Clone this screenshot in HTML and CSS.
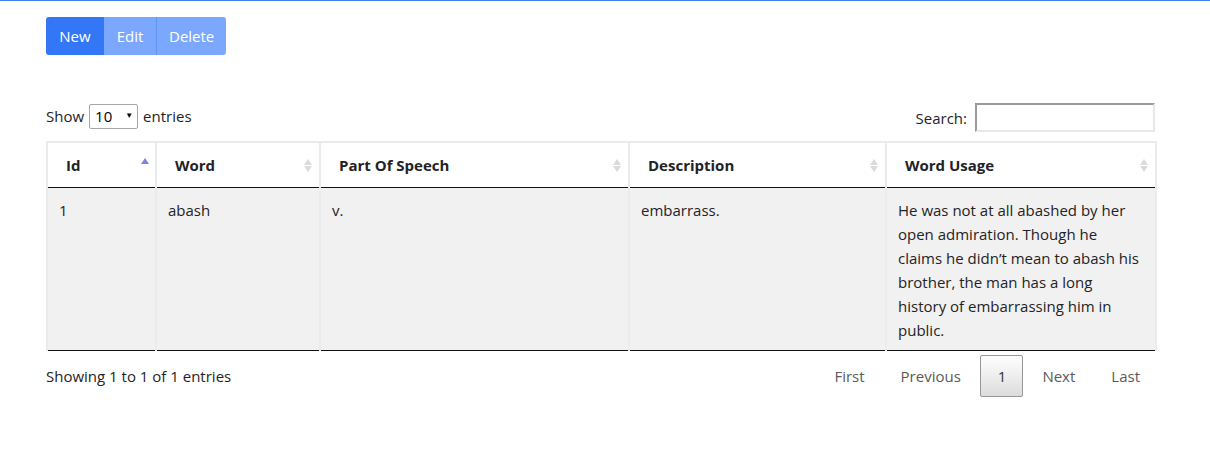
FILE: index.html
```html
<!DOCTYPE html>
<html>
<head>
<meta charset="utf-8">
<link rel="stylesheet" href="styles.css">
</head>
<body>
<div class="topline"></div>
<div class="page">
  <div class="btn-group">
    <button class="btn btn-new">New</button>
    <button class="btn btn-dis">Edit</button>
    <button class="btn btn-dis btn-last">Delete</button>
  </div>

  <div class="controls">
    <label class="length">Show
      <span class="select">10<span class="caret">&#9660;</span></span>
      entries</label>
    <label class="search">Search: <span class="search-input"></span></label>
  </div>

  <table class="grid">
    <colgroup>
      <col class="c1"><col class="c2"><col class="c3"><col class="c4"><col class="c5">
    </colgroup>
    <thead>
      <tr>
        <th class="sorted">Id<span class="sort-up"></span></th>
        <th>Word<span class="sort-both"><i class="u"></i><i class="d"></i></span></th>
        <th>Part Of Speech<span class="sort-both"><i class="u"></i><i class="d"></i></span></th>
        <th>Description<span class="sort-both"><i class="u"></i><i class="d"></i></span></th>
        <th>Word Usage<span class="sort-both"><i class="u"></i><i class="d"></i></span></th>
      </tr>
    </thead>
    <tbody>
      <tr>
        <td>1</td>
        <td>abash</td>
        <td>v.</td>
        <td>embarrass.</td>
        <td>He was not at all abashed by her open admiration. Though he claims he didn’t mean to abash his brother, the man has a long history of embarrassing him in public.</td>
      </tr>
    </tbody>
  </table>

  <div class="footer">
    <div class="info">Showing 1 to 1 of 1 entries</div>
    <div class="paging">
      <span class="pg">First</span>
      <span class="pg">Previous</span>
      <span class="pg current">1</span>
      <span class="pg">Next</span>
      <span class="pg">Last</span>
    </div>
  </div>
</div>
</body>
</html>
```

FILE: styles.css
```css
html, body {
  margin: 0;
  padding: 0;
  background: #fff;
}
body {
  font-family: "Open Sans", "Noto Sans", sans-serif;
  font-size: 15px;
  line-height: 24px;
  color: #1f2326;
}
.topline {
  height: 1px;
  background: #3c7ff7;
}
.page {
  width: 1109px;
  margin-left: 46px;
  padding-top: 16px;
}
.btn-group {
  display: flex;
}
.btn {
  font-family: inherit;
  font-size: 15px;
  line-height: 24px;
  color: #fff;
  border: none;
  padding: 7px 12px;
  height: 38px;
  margin: 0;
}
.btn-new {
  background: #3377f6;
  border-radius: 3px 0 0 3px;
  width: 58px;
}
.btn-dis {
  background: #7ba8fc;
  width: 52px;
}
.btn-last {
  width: 70px;
  border-left: 1px solid #5f93f3;
  border-radius: 0 3px 3px 0;
}
.controls {
  display: flex;
  justify-content: space-between;
  align-items: center;
  margin-top: 48px;
  height: 29px;
}
.length {
  display: flex;
  align-items: center;
  gap: 5px;
  margin-top: -3px;
}
.select {
  display: inline-flex;
  align-items: center;
  justify-content: space-between;
  box-sizing: border-box;
  width: 49px;
  height: 25px;
  border: 1px solid #a6a6a6;
  border-radius: 2px;
  padding: 0 4px 0 5px;
  font-size: 15px;
  color: #000;
}
.caret {
  font-size: 8px;
  line-height: 8px;
  margin-top: -3px;
}
.search {
  display: flex;
  align-items: center;
  gap: 8px;
}
.search-input {
  display: block;
  box-sizing: border-box;
  width: 180px;
  height: 29px;
  border-width: 2px;
  border-style: solid;
  border-top-color: #9a9a9a;
  border-left-color: #9a9a9a;
  border-right-color: #e8e8e8;
  border-bottom-color: #e8e8e8;
}
.grid {
  margin-top: 9px;
  width: 1109px;
  table-layout: fixed;
  border-collapse: collapse;
  border-top: 2px solid #e9ecef;
}
.c1 { width: 109px; }
.c2 { width: 164px; }
.c3 { width: 309px; }
.c4 { width: 257px; }
.c5 { width: 270px; }
.grid th, .grid td {
  border-left: 2px solid #e9ecef;
  border-right: 2px solid #e9ecef;
  text-align: left;
  vertical-align: top;
}
.grid th {
  position: relative;
  font-weight: 700;
  padding: 10px 18px 10px 18px;
  border-bottom: 1px solid #111;
  height: 24px;
}
.grid td {
  background: #f1f1f1;
  padding: 10px 12px 8px 11px;
  border-bottom: 1px solid #111;
}
.sort-up {
  position: absolute;
  right: 6px;
  top: 15px;
  width: 0;
  height: 0;
  border-left: 4px solid transparent;
  border-right: 4px solid transparent;
  border-bottom: 6px solid #8282e0;
}
.sort-both {
  position: absolute;
  right: 7px;
  top: 16px;
  display: flex;
  flex-direction: column;
  gap: 1px;
}
.sort-both .u, .sort-both .d {
  display: block;
  width: 0;
  height: 0;
  border-left: 4px solid transparent;
  border-right: 4px solid transparent;
}
.sort-both .u { border-bottom: 6px solid #dadada; }
.sort-both .d { border-top: 6px solid #dadada; }
.footer {
  display: flex;
  justify-content: space-between;
  align-items: center;
  margin-top: 4px;
}
.paging {
  display: flex;
  margin-right: -2px;
}
.pg {
  display: block;
  padding: 8px 16px;
  margin-left: 2px;
  border: 1px solid transparent;
  border-radius: 2px;
  color: #5a5a5a;
}
.pg.current {
  padding: 8px 16px 8px 17px;
  color: #333;
  border-color: #979797;
  background: linear-gradient(to bottom, #fff 0%, #dcdcdc 100%);
}
```
